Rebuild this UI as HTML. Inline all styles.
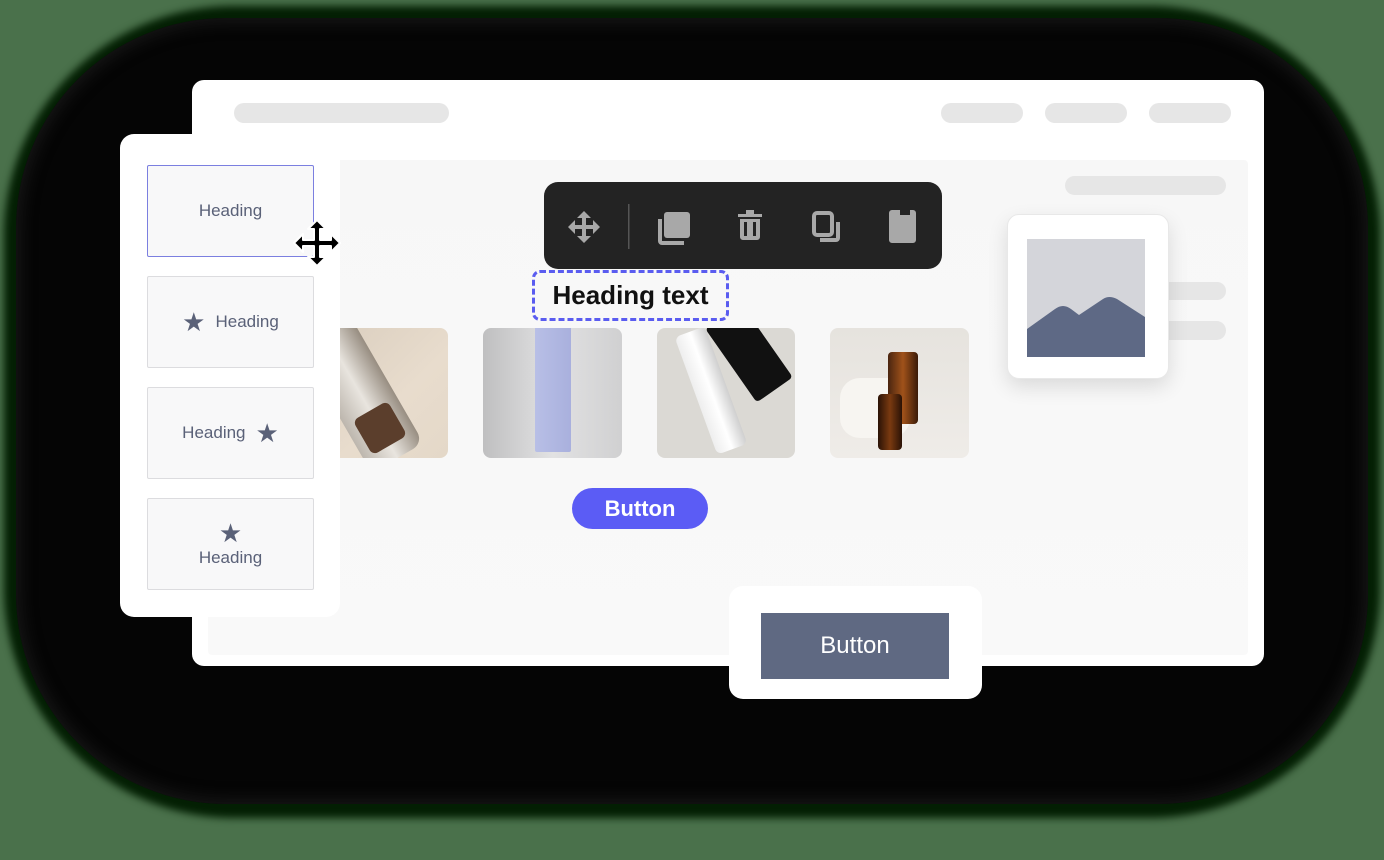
<!DOCTYPE html>
<html><head><meta charset="utf-8"><style>
*{margin:0;padding:0;box-sizing:border-box}
body{width:1384px;height:860px;overflow:hidden;background:#4a714b;position:relative;font-family:"Liberation Sans",sans-serif}
.abs{position:absolute}
.halo{left:4px;top:6px;width:1376px;height:812px;border-radius:230px;background:#031f03;filter:blur(4px)}
.blk{left:16px;top:18px;width:1352px;height:786px;border-radius:210px;background:#050505;box-shadow:inset 0 0 14px 6px #141414}
.pill{background:#e6e6e6;border-radius:10px}
.item{position:absolute;left:27px;width:167px;height:92px;background:#f8f8f9;border:1px solid #dcdcdf;border-radius:2px;color:#5a6178;font-size:17px;display:flex;align-items:center;justify-content:center;gap:10px}
.photo{position:absolute;top:328px;height:130px;border-radius:8px;overflow:hidden}
</style></head><body>
<div class="abs halo"></div>
<div class="abs blk"></div>

<div class="abs" style="left:192px;top:80px;width:1072px;height:586px;background:#fff;border-radius:12px;overflow:hidden">
  <div class="abs" style="left:16px;top:80px;width:1040px;height:495px;background:linear-gradient(180deg,#f7f7f7,#f9f9f9);border-radius:4px"></div>
  <div class="abs pill" style="left:42px;top:23px;width:215px;height:20px"></div>
  <div class="abs pill" style="left:749px;top:23px;width:82px;height:20px"></div>
  <div class="abs pill" style="left:853px;top:23px;width:82px;height:20px"></div>
  <div class="abs pill" style="left:957px;top:23px;width:82px;height:20px"></div>
  <div class="abs pill" style="left:873px;top:96px;width:161px;height:19px"></div>
  <div class="abs pill" style="left:960px;top:202px;width:74px;height:18px"></div>
  <div class="abs pill" style="left:960px;top:241px;width:74px;height:19px"></div>
</div>

<div class="photo" style="left:310px;width:138px;background:linear-gradient(135deg,#d9cdbd,#e8dccd 60%,#e4d8c8)">
  <div class="abs" style="left:20px;top:-10px;width:60px;height:150px;transform:rotate(-30deg);background:linear-gradient(90deg,#b8b2aa,#e9e6e1,#8f8579);border-radius:12px;opacity:.9"></div>
  <div class="abs" style="left:50px;top:80px;width:40px;height:40px;transform:rotate(-30deg);background:#5b3e2c;border-radius:6px"></div>
</div>
<div class="photo" style="left:483px;width:139px;background:linear-gradient(90deg,#bfbfc0,#e2e2e3 50%,#d0d0d1)">
  <div class="abs" style="left:52px;top:-4px;width:36px;height:128px;background:linear-gradient(90deg,#b8bfe6,#a9b0dd);border-radius:3px 3px 2px 2px"></div>
</div>
<div class="photo" style="left:657px;width:138px;background:#dbd9d4">
  <div class="abs" style="left:70px;top:-20px;width:44px;height:90px;transform:rotate(-35deg);background:#111;border-radius:4px"></div>
  <div class="abs" style="left:38px;top:0px;width:32px;height:125px;transform:rotate(-20deg);background:linear-gradient(90deg,#eee,#fff,#cfcfcf);border-radius:6px"></div>
</div>
<div class="photo" style="left:830px;width:139px;background:linear-gradient(180deg,#e6e3de,#efece8)">
  <div class="abs" style="left:10px;top:50px;width:70px;height:60px;background:#f7f5f1;border-radius:20px"></div>
  <div class="abs" style="left:58px;top:24px;width:30px;height:72px;background:linear-gradient(90deg,#4a2510,#a0521a,#3a1a08);border-radius:4px"></div>
  <div class="abs" style="left:48px;top:66px;width:24px;height:56px;background:linear-gradient(90deg,#2a1206,#7a3a10,#2a1206);border-radius:4px"></div>
</div>

<div class="abs" style="left:544px;top:182px;width:398px;height:87px;background:#232323;border-radius:14px">
  <svg class="abs" style="left:0;top:0" width="398" height="87" fill="#a8a8a8">
    <path d="M40 29l7 7h-5v7h7v-5l7 7-7 7v-5h-7v7h5l-7 7-7-7h5v-7h-7v5l-7-7 7-7v5h7v-7h-5z"/>
    <rect x="84" y="22" width="1.5" height="45" fill="#555"/>
    <rect x="120" y="30" width="26" height="26" rx="3"/>
    <path d="M114 37h4v22h22v4h-22a4 4 0 0 1-4-4z"/>
    <path d="M194 32h24v3h-24z M202 28h8v4h-8z M196 37h20v18a3 3 0 0 1-3 3h-14a3 3 0 0 1-3-3z"/>
    <rect x="200" y="40" width="3" height="14" fill="#232323"/><rect x="209" y="40" width="3" height="14" fill="#232323"/>
    <rect x="270" y="31" width="18" height="22" rx="3" fill="none" stroke="#a8a8a8" stroke-width="4"/>
    <path d="M292 40h4v16a4 4 0 0 1-4 4h-16v-4h16z"/>
    <path d="M348 28h8v5h10v-5h3a3 3 0 0 1 3 3v27a3 3 0 0 1-3 3h-21a3 3 0 0 1-3-3v-27a3 3 0 0 1 3-3z"/>
  </svg>
</div>

<div class="abs" style="left:532px;top:270px;width:197px;height:51px;border:3px dashed #5a5cf0;border-radius:8px;display:flex;align-items:center;justify-content:center;font-weight:bold;font-size:26px;color:#111;white-space:nowrap">Heading text</div>

<div class="abs" style="left:572px;top:488px;width:136px;height:41px;background:#5b5cf5;border-radius:21px;color:#fff;font-weight:bold;font-size:22px;display:flex;align-items:center;justify-content:center">Button</div>

<div class="abs" style="left:1007px;top:214px;width:162px;height:165px;background:#fff;border-radius:12px;box-shadow:0 8px 20px rgba(0,0,0,.12);border:1px solid #e8e8e8">
  <svg class="abs" style="left:19px;top:24px" width="118" height="118">
    <rect width="118" height="118" fill="#d4d5da"/>
    <path d="M0 90 L28 70 Q36 64 44 70 L52 76 L76 60 Q82 56 90 60 L118 78 V118 H0z" fill="#5e6985"/>
  </svg>
</div>

<div class="abs" style="left:729px;top:586px;width:253px;height:113px;background:#fff;border-radius:14px">
  <div class="abs" style="left:32px;top:27px;width:188px;height:66px;background:#5f6982;color:#fff;font-size:24px;display:flex;align-items:center;justify-content:center">Button</div>
</div>

<div class="abs" style="left:120px;top:134px;width:220px;height:483px;background:#fff;border-radius:14px">
  <div class="item" style="top:31px;border-color:#7b7fe0">Heading</div>
  <div class="item" style="top:142px"><span style="font-size:26px;line-height:1">★</span>Heading</div>
  <div class="item" style="top:253px">Heading<span style="font-size:26px;line-height:1">★</span></div>
  <div class="item" style="top:364px;flex-direction:column;gap:2px"><span style="font-size:26px;line-height:1">★</span>Heading</div>
</div>

<svg class="abs" style="left:293px;top:219px" width="48" height="48">
  <path d="M24 1l9 9h-6v11h11v-6l9 9-9 9v-6h-11v11h6l-9 9-9-9h6v-11h-11v6l-9-9 9-9v6h11v-11h-6z" fill="#000" stroke="#fff" stroke-width="2" stroke-linejoin="round"/>
</svg>
</body></html>
